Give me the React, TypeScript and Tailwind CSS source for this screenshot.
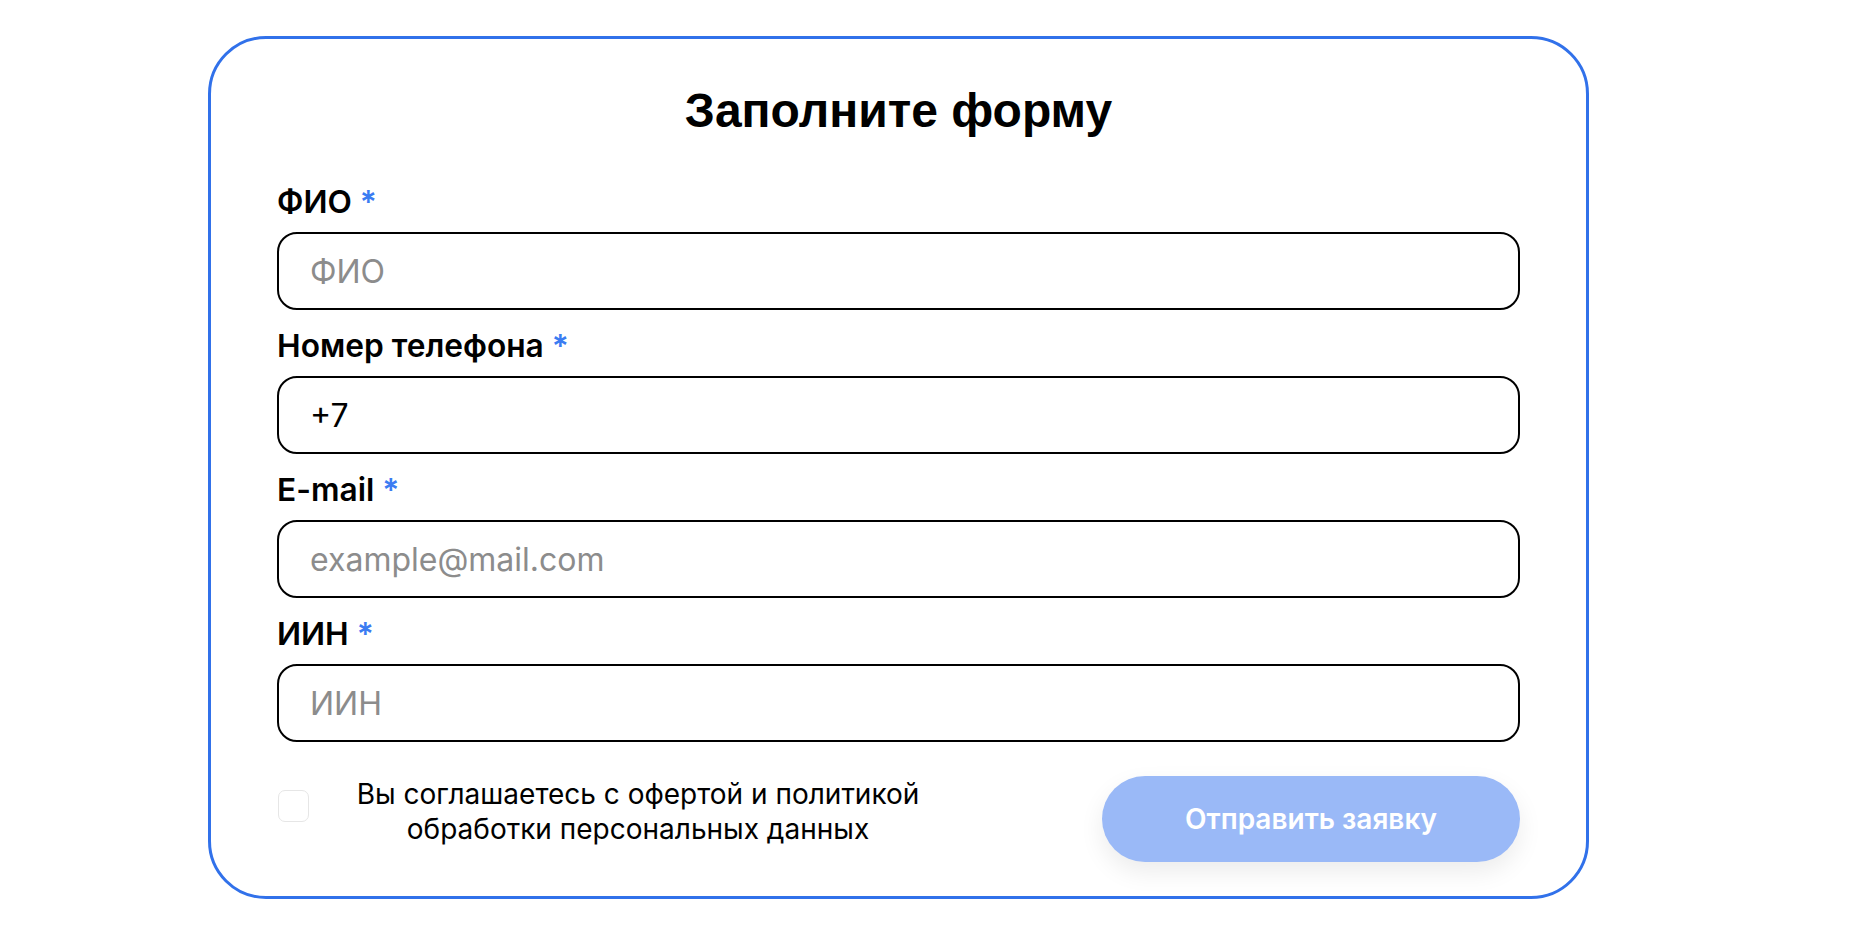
import { useState } from 'react';

type Field = {
  id: string;
  label: string;
  placeholder: string;
  defaultValue?: string;
  type?: string;
};

const FIELDS: Field[] = [
  { id: 'fio', label: 'ФИО', placeholder: 'ФИО' },
  { id: 'phone', label: 'Номер телефона', placeholder: '+7', defaultValue: '+7', type: 'tel' },
  { id: 'email', label: 'E-mail', placeholder: 'example@mail.com', type: 'email' },
  { id: 'iin', label: 'ИИН', placeholder: 'ИИН' },
];

function FormField({ field }: { field: Field }) {
  return (
    <div className="flex flex-col gap-[16px]">
      <label
        htmlFor={field.id}
        className="font-['Inter',sans-serif] text-[31.7px] leading-[28px] font-semibold text-black"
      >
        {field.label} <span className="text-[#3b7cf2]">*</span>
      </label>
      <input
        id={field.id}
        type={field.type ?? 'text'}
        placeholder={field.placeholder}
        defaultValue={field.defaultValue}
        className="h-[78px] w-full rounded-[20px] border-2 border-black bg-white pl-[31px] pr-6 font-['Inter',sans-serif] text-[32px] text-black placeholder:text-[#8c8c8c] outline-none"
      />
    </div>
  );
}

export default function App() {
  const [agreed, setAgreed] = useState(false);

  return (
    <div className="min-h-screen bg-white pl-[208px] pt-[36px]">
      <form
        onSubmit={(e) => e.preventDefault()}
        className="w-[1381px] rounded-[58px] border-[3px] border-[#3171ea] bg-white px-[66px] pt-[48px] pb-[34px]"
      >
        <h1 className="text-center font-['Liberation_Sans',Arial,sans-serif] text-[48px] leading-none font-bold text-black">
          Заполните форму
        </h1>

        <div className="mt-[53px] flex flex-col gap-[22px]">
          {FIELDS.map((f) => (
            <FormField key={f.id} field={f} />
          ))}
        </div>

        {/* Согласие + кнопка */}
        <div className="mt-[34px] flex items-start justify-between">
          <label className="flex items-start gap-[44px] cursor-pointer">
            <input
              type="checkbox"
              checked={agreed}
              onChange={(e) => setAgreed(e.target.checked)}
              className="mt-[14px] ml-[1px] h-[32px] w-[31px] appearance-none rounded-[7px] border border-[#e6e6e6] bg-white"
            />
            <span className="mt-[1px] w-[570px] text-center font-['Inter',sans-serif] text-[28px] leading-[35px] text-black">
              Вы соглашаетесь с офертой и политикой обработки персональных данных
            </span>
          </label>
          <button
            type="submit"
            className="h-[86px] w-[418px] rounded-full bg-[#9ab9f7] font-['Inter',sans-serif] text-[28px] font-semibold text-white shadow-[0_10px_24px_rgba(0,0,0,0.08)]"
          >
            Отправить заявку
          </button>
        </div>
      </form>
    </div>
  );
}
